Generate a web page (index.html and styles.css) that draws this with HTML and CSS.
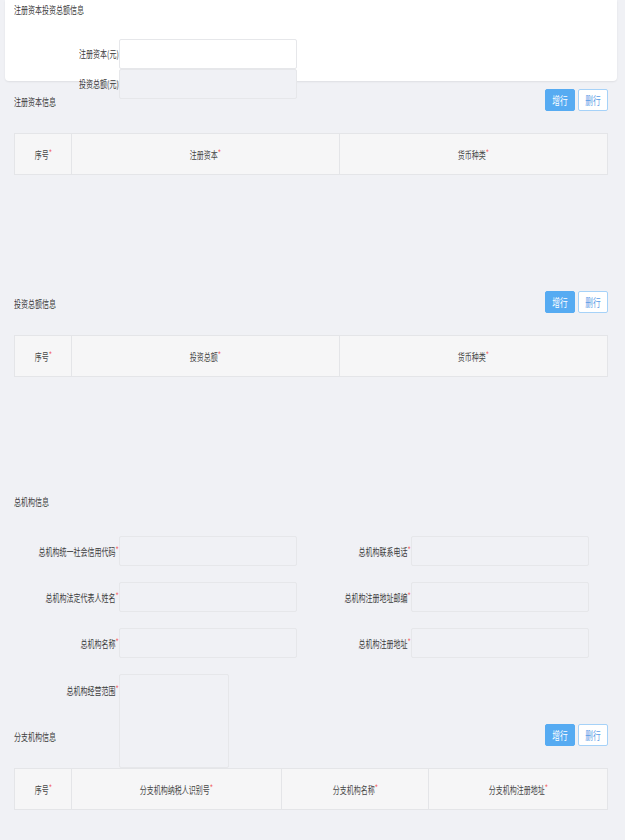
FILE: index.html
```html
<html lang="zh-CN">
  <head>
    <meta charset="UTF-8" />
    <meta name="viewport" content="width=device-width, initial-scale=1.0" />
    <title>注册资本投资总额信息</title>
    <link rel="stylesheet" href="styles.css">
  </head>
  <body>
    <!-- 顶部白色卡片 -->
    <div class="card">
      <div class="card-title"><span class="sx left">注册资本投资总额信息</span></div>
      <div class="form single">
        <div class="row">
          <label class="lbl"><span class="sx">注册资本(元)</span></label>
          <input class="ipt white" type="text" />
        </div>
        <div class="row">
          <label class="lbl"><span class="sx">投资总额(元)</span></label>
          <input class="ipt" type="text" />
        </div>
      </div>
    </div>

    <!-- 注册资本信息 -->
    <div class="section">
      <div class="sec-head first">
        <span class="sx left">注册资本信息</span>
        <div class="btns">
          <button class="btn primary"><span class="sx mid">增行</span></button>
          <button class="btn"><span class="sx mid">删行</span></button>
        </div>
      </div>
      <table class="grid-table">
        <colgroup><col style="width:57px"><col style="width:268px"><col></colgroup>
        <tr>
          <th><span class="sx mid">序号<i>*</i></span></th>
          <th><span class="sx mid">注册资本<i>*</i></span></th>
          <th><span class="sx mid">货币种类<i>*</i></span></th>
        </tr>
      </table>
    </div>

    <!-- 投资总额信息 -->
    <div class="section">
      <div class="sec-head gap">
        <span class="sx left">投资总额信息</span>
        <div class="btns">
          <button class="btn primary"><span class="sx mid">增行</span></button>
          <button class="btn"><span class="sx mid">删行</span></button>
        </div>
      </div>
      <table class="grid-table">
        <colgroup><col style="width:57px"><col style="width:268px"><col></colgroup>
        <tr>
          <th><span class="sx mid">序号<i>*</i></span></th>
          <th><span class="sx mid">投资总额<i>*</i></span></th>
          <th><span class="sx mid">货币种类<i>*</i></span></th>
        </tr>
      </table>
    </div>

    <!-- 总机构信息 -->
    <div class="section">
      <div class="sec-head gap2">
        <span class="sx left">总机构信息</span>
      </div>
      <div class="form double">
        <div class="row">
          <label class="lbl"><span class="sx">总机构统一社会信用代码<i>*</i></span></label>
          <input class="ipt" type="text" />
        </div>
        <div class="row">
          <label class="lbl"><span class="sx">总机构联系电话<i>*</i></span></label>
          <input class="ipt" type="text" />
        </div>
        <div class="row">
          <label class="lbl"><span class="sx">总机构法定代表人姓名<i>*</i></span></label>
          <input class="ipt" type="text" />
        </div>
        <div class="row">
          <label class="lbl"><span class="sx">总机构注册地址邮编<i>*</i></span></label>
          <input class="ipt" type="text" />
        </div>
        <div class="row">
          <label class="lbl"><span class="sx">总机构名称<i>*</i></span></label>
          <input class="ipt" type="text" />
        </div>
        <div class="row">
          <label class="lbl"><span class="sx">总机构注册地址<i>*</i></span></label>
          <input class="ipt" type="text" />
        </div>
        <div class="row">
          <label class="lbl top"><span class="sx">总机构经营范围<i>*</i></span></label>
          <textarea class="area"></textarea>
        </div>
      </div>
    </div>

    <!-- 分支机构信息 -->
    <div class="section">
      <div class="sec-head gap3">
        <span class="sx left">分支机构信息</span>
        <div class="btns">
          <button class="btn primary"><span class="sx mid">增行</span></button>
          <button class="btn"><span class="sx mid">删行</span></button>
        </div>
      </div>
      <table class="grid-table">
        <colgroup><col style="width:57px"><col style="width:210px"><col style="width:147px"><col></colgroup>
        <tr>
          <th><span class="sx mid">序号<i>*</i></span></th>
          <th><span class="sx mid">分支机构纳税人识别号<i>*</i></span></th>
          <th><span class="sx mid">分支机构名称<i>*</i></span></th>
          <th><span class="sx mid">分支机构注册地址<i>*</i></span></th>
        </tr>
      </table>
    </div>
  </body>
</html>
```

FILE: styles.css
```css
body {
  margin: 0;
  background: #f0f1f5;
  font-family: "Noto Sans CJK SC", "Noto Sans", sans-serif;
  font-size: 10px;
  color: #3a3a3a;
}

/* 截图里的文字是横向压扁的，用 scaleX 模拟 */
.sx {
  display: inline-block;
  flex: none;
  transform: scaleX(0.7);
  transform-origin: right center;
  white-space: nowrap;
}
.sx.left {
  transform-origin: left center;
}
.sx.mid {
  transform-origin: center center;
}
.sx i {
  font-style: normal;
  color: #f26d6d;
  font-size: 10px;
  line-height: 1;
  vertical-align: 2px;
}

/* 顶部卡片 */
.card {
  margin: 0 8px 0 5px;
  height: 81px;
  padding: 4px 9px;
  box-sizing: border-box;
  background: #fff;
  border-radius: 0 0 4px 4px;
  box-shadow: 0 1px 2px rgba(0, 0, 0, 0.08);
}
.card-title {
  height: 12px;
  line-height: 12px;
}
.card .form {
  margin-top: 23px;
}

/* 表单行 */
.row {
  display: flex;
  align-items: center;
  height: 30px;
}
.lbl {
  width: 105px;
  flex: none;
  display: flex;
  justify-content: flex-end;
  line-height: 12px;
}
.lbl.top {
  align-self: flex-start;
  padding-top: 10px;
}
.ipt {
  width: 178px;
  height: 30px;
  box-sizing: border-box;
  margin: 0;
  border: 1px solid #e6e7ea;
  border-radius: 2px;
  background: #f0f1f5;
  outline: none;
}
.ipt.white {
  background: #fff;
}
.area {
  align-self: flex-start;
  width: 110px;
  height: 94px;
  box-sizing: border-box;
  margin: 0;
  border: 1px solid #e6e7ea;
  border-radius: 2px;
  background: #f0f1f5;
  resize: none;
  outline: none;
}
.form.double {
  display: grid;
  grid-template-columns: 292px 292px;
  grid-auto-rows: 30px;
  row-gap: 16px;
  margin-top: 25px;
}

/* 区块 */
.section {
  padding: 0 17px 0 14px;
}
.sec-head {
  display: flex;
  justify-content: space-between;
  align-items: center;
  height: 22px;
}
.sec-head > .sx {
  padding-top: 3px;
}
.sec-head.first {
  margin-top: 8px;
}
.sec-head.gap {
  margin-top: 116px;
}
.sec-head.gap2 {
  margin-top: 112px;
}
.sec-head.gap3 {
  margin-top: 20px;
}
.btns {
  display: flex;
  gap: 3px;
}
.btn {
  width: 30px;
  height: 22px;
  padding: 0;
  border: 1px solid #a6d2f8;
  border-radius: 2px;
  background: #fff;
  color: #5c9de6;
  font-family: inherit;
  font-size: 11px;
}
.btn.primary {
  background: #56abf2;
  border-color: #56abf2;
  color: #fff;
}

/* 表格 */
.grid-table {
  width: 100%;
  margin-top: 22px;
  border-collapse: collapse;
  table-layout: fixed;
  background: #f6f6f7;
  font-size: 10px;
}
.grid-table th {
  height: 41px;
  box-sizing: border-box;
  border: 1px solid #e4e5e8;
  font-weight: normal;
  color: #444;
  padding: 0;
}
```
